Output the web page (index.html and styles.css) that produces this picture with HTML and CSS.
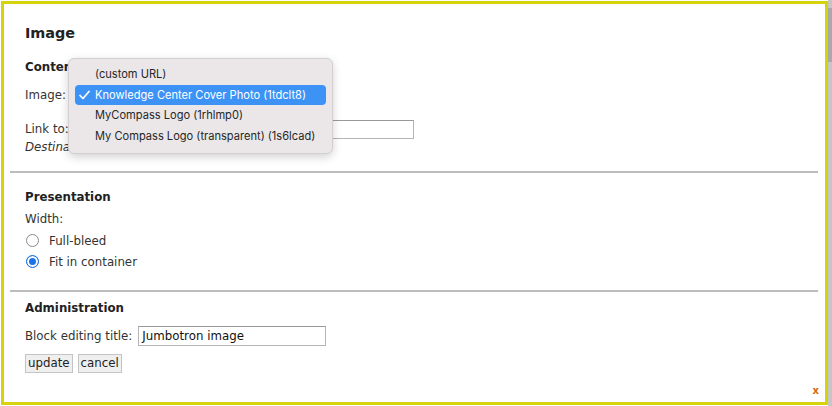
FILE: index.html
```html
<!DOCTYPE html>
<html>
<head>
<meta charset="utf-8">
<link rel="stylesheet" href="styles.css">
</head>
<body>
<div class="frame">
  <div class="title">Image</div>

  <div class="section first">
    <div class="heading">Content</div>
    <div class="row image-row">
      <span class="label">Image:</span>
      <span class="select-box"></span>
    </div>
    <div class="row link-row">
      <span class="label">Link to:</span>
      <span class="input link-input"></span>
    </div>
    <div class="help">Destination if image is clicked</div>
  </div>

  <div class="section">
    <div class="heading pres-heading">Presentation</div>
    <div class="width-label">Width:</div>
    <div class="radios">
      <div class="radio-row"><span class="radio"></span><span>Full-bleed</span></div>
      <div class="radio-row"><span class="radio checked"></span><span>Fit in container</span></div>
    </div>
  </div>

  <div class="section admin">
    <div class="heading">Administration</div>
    <div class="row title-row">
      <span class="label">Block editing title:</span>
      <span class="input title-input">Jumbotron image</span>
    </div>
    <div class="buttons">
      <span class="btn">update</span>
      <span class="btn">cancel</span>
    </div>
    <div class="footer"><span class="close">x</span></div>
  </div>

  <div class="menu">
    <div class="item">(custom URL)</div>
    <div class="item selected">
      <svg class="check" width="11" height="10" viewBox="0 0 11 10"><polyline points="1,5.5 4,8.5 10,1.5" fill="none" stroke="#fff" stroke-width="1.7" stroke-linecap="round" stroke-linejoin="round"/></svg>
      Knowledge Center Cover Photo (1tdclt8)
    </div>
    <div class="item">MyCompass Logo (1rhlmp0)</div>
    <div class="item">My Compass Logo (transparent) (1s6lcad)</div>
  </div>
</div>
<div class="scroll"><div class="thumb"></div></div>
</body>
</html>
```

FILE: styles.css
```css
html, body {
  margin: 0;
  background: #fff;
}
body {
  display: flex;
  height: 406px;
  overflow: hidden;
  font-family: "DejaVu Sans", Verdana, sans-serif;
  font-size: 11.8px;
  color: #333;
}
.frame {
  flex: 1;
  box-sizing: border-box;
  height: 404px;
  margin: 1px 0 0 1px;
  border: 3px solid #d6d20c;
  position: relative;
  padding: 20px 7px 0 6px;
}
.scroll {
  width: 4px;
  background: #c6c6c6;
}
.thumb {
  margin-top: 8px;
  height: 54px;
  background: #a9a9a9;
}
.title {
  padding-left: 15px;
  font-weight: bold;
  font-size: 14.4px;
  line-height: 18px;
  color: #222;
}
.section {
  padding: 0 15px;
  border-top: 2px solid #bdbdbd;
}
.section.first {
  border-top: none;
  padding-top: 17px;
  padding-bottom: 16px;
}
.heading {
  font-weight: bold;
  line-height: 16px;
  color: #222;
}
.row {
  display: flex;
  align-items: center;
  height: 20px;
  line-height: 16px;
}
.label {
  margin-right: 5px;
}
.image-row { margin-top: 10px; }
.link-row { margin-top: 14px; }
.select-box {
  box-sizing: border-box;
  width: 240px;
  height: 20px;
  border: 1px solid #aaa;
  border-radius: 4px;
}
.input {
  box-sizing: border-box;
  height: 20px;
  border: 1px solid #b5b5b5;
  border-top-color: #999;
  background: #fff;
  padding: 0 3px;
  line-height: 18px;
  color: #111;
}
.link-input { width: 340px; height: 19px; }
.help {
  font-style: italic;
  line-height: 16px;
}
.pres-heading { margin-top: 16px; }
.width-label {
  margin-top: 6px;
  line-height: 16px;
}
.radios {
  margin-top: 3px;
  padding-bottom: 18px;
}
.radio-row {
  display: flex;
  align-items: center;
  height: 21px;
  gap: 10px;
}
.radio {
  box-sizing: border-box;
  width: 13px;
  height: 13px;
  margin-left: 1px;
  border-radius: 50%;
  border: 1px solid #8a8a8a;
  background: #fff;
}
.radio.checked {
  border: 1.5px solid #1c74e6;
  background: #1c74e6;
  box-shadow: inset 0 0 0 2px #fff;
}
.admin { padding-top: 8px; }
.title-row { margin-top: 10px; }
.title-input { width: 188px; margin-left: 1px; }
.buttons {
  display: flex;
  gap: 5px;
  margin-top: 8px;
}
.btn {
  box-sizing: border-box;
  height: 19px;
  line-height: 17px;
  padding: 0 2px;
  background: #efefef;
  border: 1px solid #c4c4c4;
  color: #222;
}
.footer {
  display: flex;
  justify-content: flex-end;
  margin-top: 12px;
  margin-right: -16px;
}
.close {
  font-weight: bold;
  font-size: 10px;
  line-height: 12px;
  color: #d9690a;
}
.menu {
  position: absolute;
  left: 64px;
  top: 54px;
  width: 265px;
  box-sizing: border-box;
  padding: 5px 6px 7px;
  background: #ebe7e9;
  border: 1px solid #d3cfd1;
  border-radius: 6px;
  box-shadow: 0 3px 10px rgba(0, 0, 0, 0.18);
  font-family: Inter, "Liberation Sans", sans-serif;
  font-size: 11.1px;
  color: #262626;
}
.item {
  display: flex;
  align-items: center;
  height: 20.5px;
  padding-left: 20px;
  border-radius: 4px;
  white-space: nowrap;
}
.item.selected {
  background: #3d93f5;
  color: #fff;
  padding-left: 4px;
}
.check {
  margin-right: 5px;
}
```
